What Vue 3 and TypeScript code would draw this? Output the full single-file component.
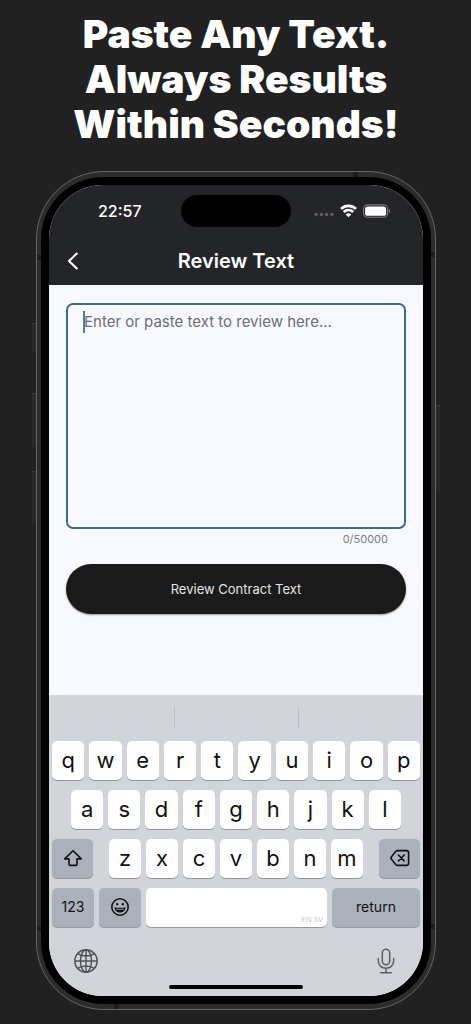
<script setup lang="ts">
import { computed, ref } from 'vue'

const limit = 50000
const text = ref('')
const counter = computed(() => `${text.value.length}/${limit}`)

const topRow: string[] = 'qwertyuiop'.split('')
const middleRow: string[] = 'asdfghjkl'.split('')
const bottomRow: string[] = 'zxcvbnm'.split('')

function type(letter: string) {
  if (text.value.length < limit) text.value += letter
}

function erase() {
  text.value = text.value.slice(0, -1)
}
</script>

<template>
  <main class="page">
    <h1 class="headline">Paste Any Text.<br />Always Results<br />Within Seconds!</h1>

    <div class="phone">
      <span class="side mute"></span>
      <span class="side volume-up"></span>
      <span class="side volume-down"></span>
      <span class="side power"></span>
      <span class="band top-band"></span>
      <span class="band bottom-band"></span>
      <span class="band left-upper"></span>
      <span class="band left-lower"></span>
      <span class="band right-upper"></span>
      <span class="band right-lower"></span>

      <div class="bezel">
        <div class="screen">
          <header class="top">
            <div class="status">
              <span class="time">22:57</span>
              <span class="island"></span>
              <span class="indicators">
                <svg class="dots" width="20" height="14" viewBox="0 0 20 14" fill="#5d5e62">
                  <circle cx="2" cy="10.5" r="1.8" /><circle cx="7.3" cy="10.5" r="1.8" />
                  <circle cx="12.6" cy="10.5" r="1.8" /><circle cx="17.9" cy="10.5" r="1.8" />
                </svg>
                <svg width="17" height="14" viewBox="0 0 17 14" fill="none" stroke="#fff" stroke-width="2.6">
                  <path d="M1 4.9C5.2.9 11.8.9 16 4.9" />
                  <path d="M3.7 8C6.4 5.4 10.6 5.4 13.3 8" />
                  <path d="M8.5 13.2 5.7 10.4C7.4 8.9 9.6 8.9 11.3 10.4Z" fill="#fff" stroke="none" />
                </svg>
                <svg width="28" height="14" viewBox="0 0 28 14">
                  <rect x=".6" y=".9" width="24" height="12.4" rx="4" fill="none" stroke="#77787b" stroke-width="1.1" />
                  <rect x="2.1" y="2.4" width="21" height="9.4" rx="2.6" fill="#fff" />
                  <path d="M25.8 5.1c1.9.6 1.9 3.4 0 4z" fill="#77787b" />
                </svg>
              </span>
            </div>
            <div class="nav">
              <button class="back" type="button" aria-label="Back">
                <svg width="12" height="18" viewBox="0 0 12 18" fill="none" stroke="#fff" stroke-width="2.1" stroke-linecap="round" stroke-linejoin="round">
                  <path d="M9.8 1.6 2 9l7.8 7.4" />
                </svg>
              </button>
              <h2 class="title">Review Text</h2>
            </div>
          </header>

          <section class="content">
            <div class="field">
              <textarea v-model="text" class="input" :maxlength="limit" aria-label="Text to review" placeholder="Enter or paste text to review here..."></textarea>
              <span v-if="!text" class="caret"></span>
            </div>
            <div class="counter">{{ counter }}</div>
            <button class="submit" type="button">Review Contract Text</button>
          </section>

          <section class="keyboard">
            <div class="suggestions"><span></span><span></span><span></span></div>
            <div class="row">
              <button v-for="k in topRow" :key="k" class="key" type="button" @click="type(k)">{{ k }}</button>
            </div>
            <div class="row inset">
              <button v-for="k in middleRow" :key="k" class="key" type="button" @click="type(k)">{{ k }}</button>
            </div>
            <div class="row">
              <button class="key dark shift" type="button" aria-label="Shift">
                <svg width="20" height="18" viewBox="0 0 20 18" fill="none" stroke="#111" stroke-width="1.6" stroke-linejoin="round">
                  <path d="M10 1.7 1.7 9.9H6V15.2Q6 16.4 7.2 16.4H12.8Q14 16.4 14 15.2V9.9H18.3Z" />
                </svg>
              </button>
              <div class="row letters">
                <button v-for="k in bottomRow" :key="k" class="key" type="button" @click="type(k)">{{ k }}</button>
              </div>
              <button class="key dark shift" type="button" aria-label="Delete" @click="erase">
                <svg width="20" height="18" viewBox="0 0 20 18" fill="none" stroke="#111" stroke-width="1.6" stroke-linecap="round" stroke-linejoin="round">
                  <path d="M7.4 1.6H16.4Q18.6 1.6 18.6 3.8V14.2Q18.6 16.4 16.4 16.4H7.4Q6.5 16.4 5.9 15.7L1.3 10Q.5 9 1.3 8L5.9 2.3Q6.5 1.6 7.4 1.6Z" />
                  <path d="m8.4 6 5.8 6M14.2 6l-5.8 6" />
                </svg>
              </button>
            </div>
            <div class="row">
              <button class="key dark mode" type="button">123</button>
              <button class="key dark mode" type="button" aria-label="Emoji">
                <svg width="20" height="20" viewBox="0 0 20 20" fill="none" stroke="#111" stroke-width="1.6">
                  <circle cx="10" cy="10" r="8.2" />
                  <ellipse cx="7.2" cy="7.2" rx="1" ry="1.4" fill="#111" stroke="none" />
                  <ellipse cx="12.8" cy="7.2" rx="1" ry="1.4" fill="#111" stroke="none" />
                  <path d="M4.4 10.2Q10 11.4 15.6 10.2C15 17.4 5 17.4 4.4 10.2Z" fill="#111" stroke="none" />
                  <path d="M6 12Q10 12.9 14 12" stroke="#abb1bb" stroke-width=".8" />
                </svg>
              </button>
              <button class="key space" type="button" aria-label="Space" @click="type(' ')">EN SV</button>
              <button class="key dark return" type="button" @click="type('\n')">return</button>
            </div>
            <div class="tools">
              <button class="tool" type="button" aria-label="Next keyboard">
                <svg width="26" height="26" viewBox="0 0 26 26" fill="none" stroke="#505258" stroke-width="1.4">
                  <circle cx="13" cy="13" r="11.2" />
                  <ellipse cx="13" cy="13" rx="5.5" ry="11.2" />
                  <path d="M13 1.8v22.4M1.8 13h22.4M4.8 5.6C9 8.8 17 8.8 21.2 5.6M4.8 20.4C9 17.2 17 17.2 21.2 20.4" />
                </svg>
              </button>
              <button class="tool" type="button" aria-label="Dictate">
                <svg width="26" height="26" viewBox="0 0 26 26" fill="none" stroke="#5b5d63" stroke-width="1.5" stroke-linecap="round">
                  <rect x="9.3" y="1.2" width="7.4" height="15.6" rx="3.7" />
                  <path d="M5.3 10.5v2.3c0 9.8 15.4 9.8 15.4 0v-2.3M13 20.2v4.4M7.8 24.8h10.4" />
                </svg>
              </button>
            </div>
            <div class="home"></div>
          </section>
        </div>
      </div>
    </div>
  </main>
</template>

<style>
html,
body {
  background: #212121;
}
</style>

<style scoped>
.page {
  box-sizing: border-box;
  min-height: 100vh;
  padding: 11px 35px 14px 36px;
  background: #212121;
  font-family: Inter, "Liberation Sans", sans-serif;
}

.headline {
  margin: 0 0 25px;
  color: #fff;
  font-size: 39px;
  font-weight: 900;
  line-height: 45px;
  text-align: center;
  white-space: nowrap;
}

.phone {
  position: relative;
  box-sizing: border-box;
  padding: 5px 4px;
  border: 1px solid #666;
  border-radius: 68px;
  background: #2c2c2c;
}

.side {
  position: absolute;
  left: -5px;
  box-sizing: border-box;
  width: 4px;
  border-top: 1px solid #3b3b3b;
  background: #292929;
}

.mute { top: 151px; height: 29px; }
.volume-up { top: 221px; height: 54px; }
.volume-down { top: 299px; height: 54px; }
.power { top: 233px; right: -5px; left: auto; height: 87px; }

.band {
  position: absolute;
  width: 5px;
  height: 5px;
  background: #1d1d1d;
}

.top-band { top: 0; right: 77px; }
.bottom-band { bottom: 0; left: 77px; }
.left-upper { top: 83px; left: 0; }
.left-lower { bottom: 78px; left: 0; }
.right-upper { top: 80px; right: 0; }
.right-lower { bottom: 80px; right: 0; }

.bezel {
  position: relative;
  padding: 8px;
  border-radius: 62px;
  background: #000;
}

.screen {
  overflow: hidden;
  border-radius: 54px;
  background: #f8f9ff;
}

.top {
  background: #242529;
  color: #fff;
}

.status {
  display: grid;
  grid-template-columns: 1fr 110px 1fr;
  align-items: center;
  height: 52px;
}

.time {
  padding-left: 49px;
  font-size: 16px;
  font-weight: 500;
}

.island {
  height: 32px;
  border-radius: 16px;
  background: #000;
}

.indicators {
  display: flex;
  gap: 6px;
  justify-content: flex-end;
  padding-right: 32px;
}

.nav {
  display: grid;
  grid-template-columns: 48px 1fr 48px;
  align-items: center;
  height: 48px;
}

button {
  display: flex;
  align-items: center;
  justify-content: center;
  margin: 0;
  padding: 0;
  border: 0;
  font-family: inherit;
  cursor: pointer;
}

.back {
  height: 48px;
  background: none;
}

.title {
  margin: 0;
  font-size: 20px;
  font-weight: 600;
  text-align: center;
}

.content {
  padding: 18px 17px 81px;
}

.field {
  position: relative;
}

.input {
  display: block;
  box-sizing: border-box;
  width: 100%;
  height: 226px;
  padding: 7px 16px;
  border: 2px solid #3b6b95;
  border-radius: 7px;
  outline: none;
  background: transparent;
  color: #242529;
  font-family: inherit;
  font-size: 15px;
  line-height: 20px;
  resize: none;
}

.input::placeholder {
  color: #6d6e74;
  opacity: 1;
}

.caret {
  position: absolute;
  top: 8px;
  left: 17px;
  width: 2px;
  height: 22px;
  background: #4a7daa;
}

.counter {
  padding: 2px 18px 17px;
  color: #7d7e84;
  font-size: 11px;
  line-height: 16px;
  text-align: right;
}

.submit {
  width: 100%;
  height: 50px;
  border-radius: 25px;
  background: #1a1a1a;
  box-shadow: 0 1px 2px rgb(0 0 0 / 40%);
  color: #e4e4e4;
  font-size: 13px;
}

.keyboard {
  display: flex;
  flex-direction: column;
  gap: 10px;
  padding: 0 3px 7px;
  background: #d1d4d9;
}

.suggestions {
  display: grid;
  grid-template-columns: repeat(3, 1fr);
  height: 22px;
  margin: 11px -3px 3px;
}

.suggestions span + span {
  border-left: 1px solid #bdc0c5;
}

.row {
  display: flex;
  gap: 5px;
}

.inset {
  padding: 0 19px;
}

.letters {
  flex: 1;
  padding: 0 11px;
}

.key {
  box-sizing: border-box;
  flex: 1 1 0;
  min-width: 0;
  height: 39px;
  padding-bottom: 2px;
  border-radius: 5px;
  background: #fff;
  box-shadow: 0 1px 0 #94979c;
  color: #111;
  font-size: 22px;
  line-height: 32px;
}

.dark {
  padding-bottom: 1px;
  background: #abb1bb;
}

.shift {
  flex: 0 0 41px;
}

.mode {
  flex: 0 0 42px;
  font-size: 14px;
}

.return {
  flex: 0 0 88px;
  font-size: 14px;
}

.space {
  align-items: flex-end;
  justify-content: flex-end;
  padding: 0 4px 2px;
  color: #bfc0c3;
  font-family: "Liberation Sans Narrow", "Open Sans", sans-serif;
  font-size: 8px;
  line-height: 12px;
}

.tools {
  display: flex;
  justify-content: space-between;
  padding: 11px 21px 1px;
}

.tool {
  width: 26px;
  height: 26px;
  background: none;
}

.home {
  align-self: center;
  width: 134px;
  height: 4px;
  border-radius: 2px;
  background: #000;
}
</style>
